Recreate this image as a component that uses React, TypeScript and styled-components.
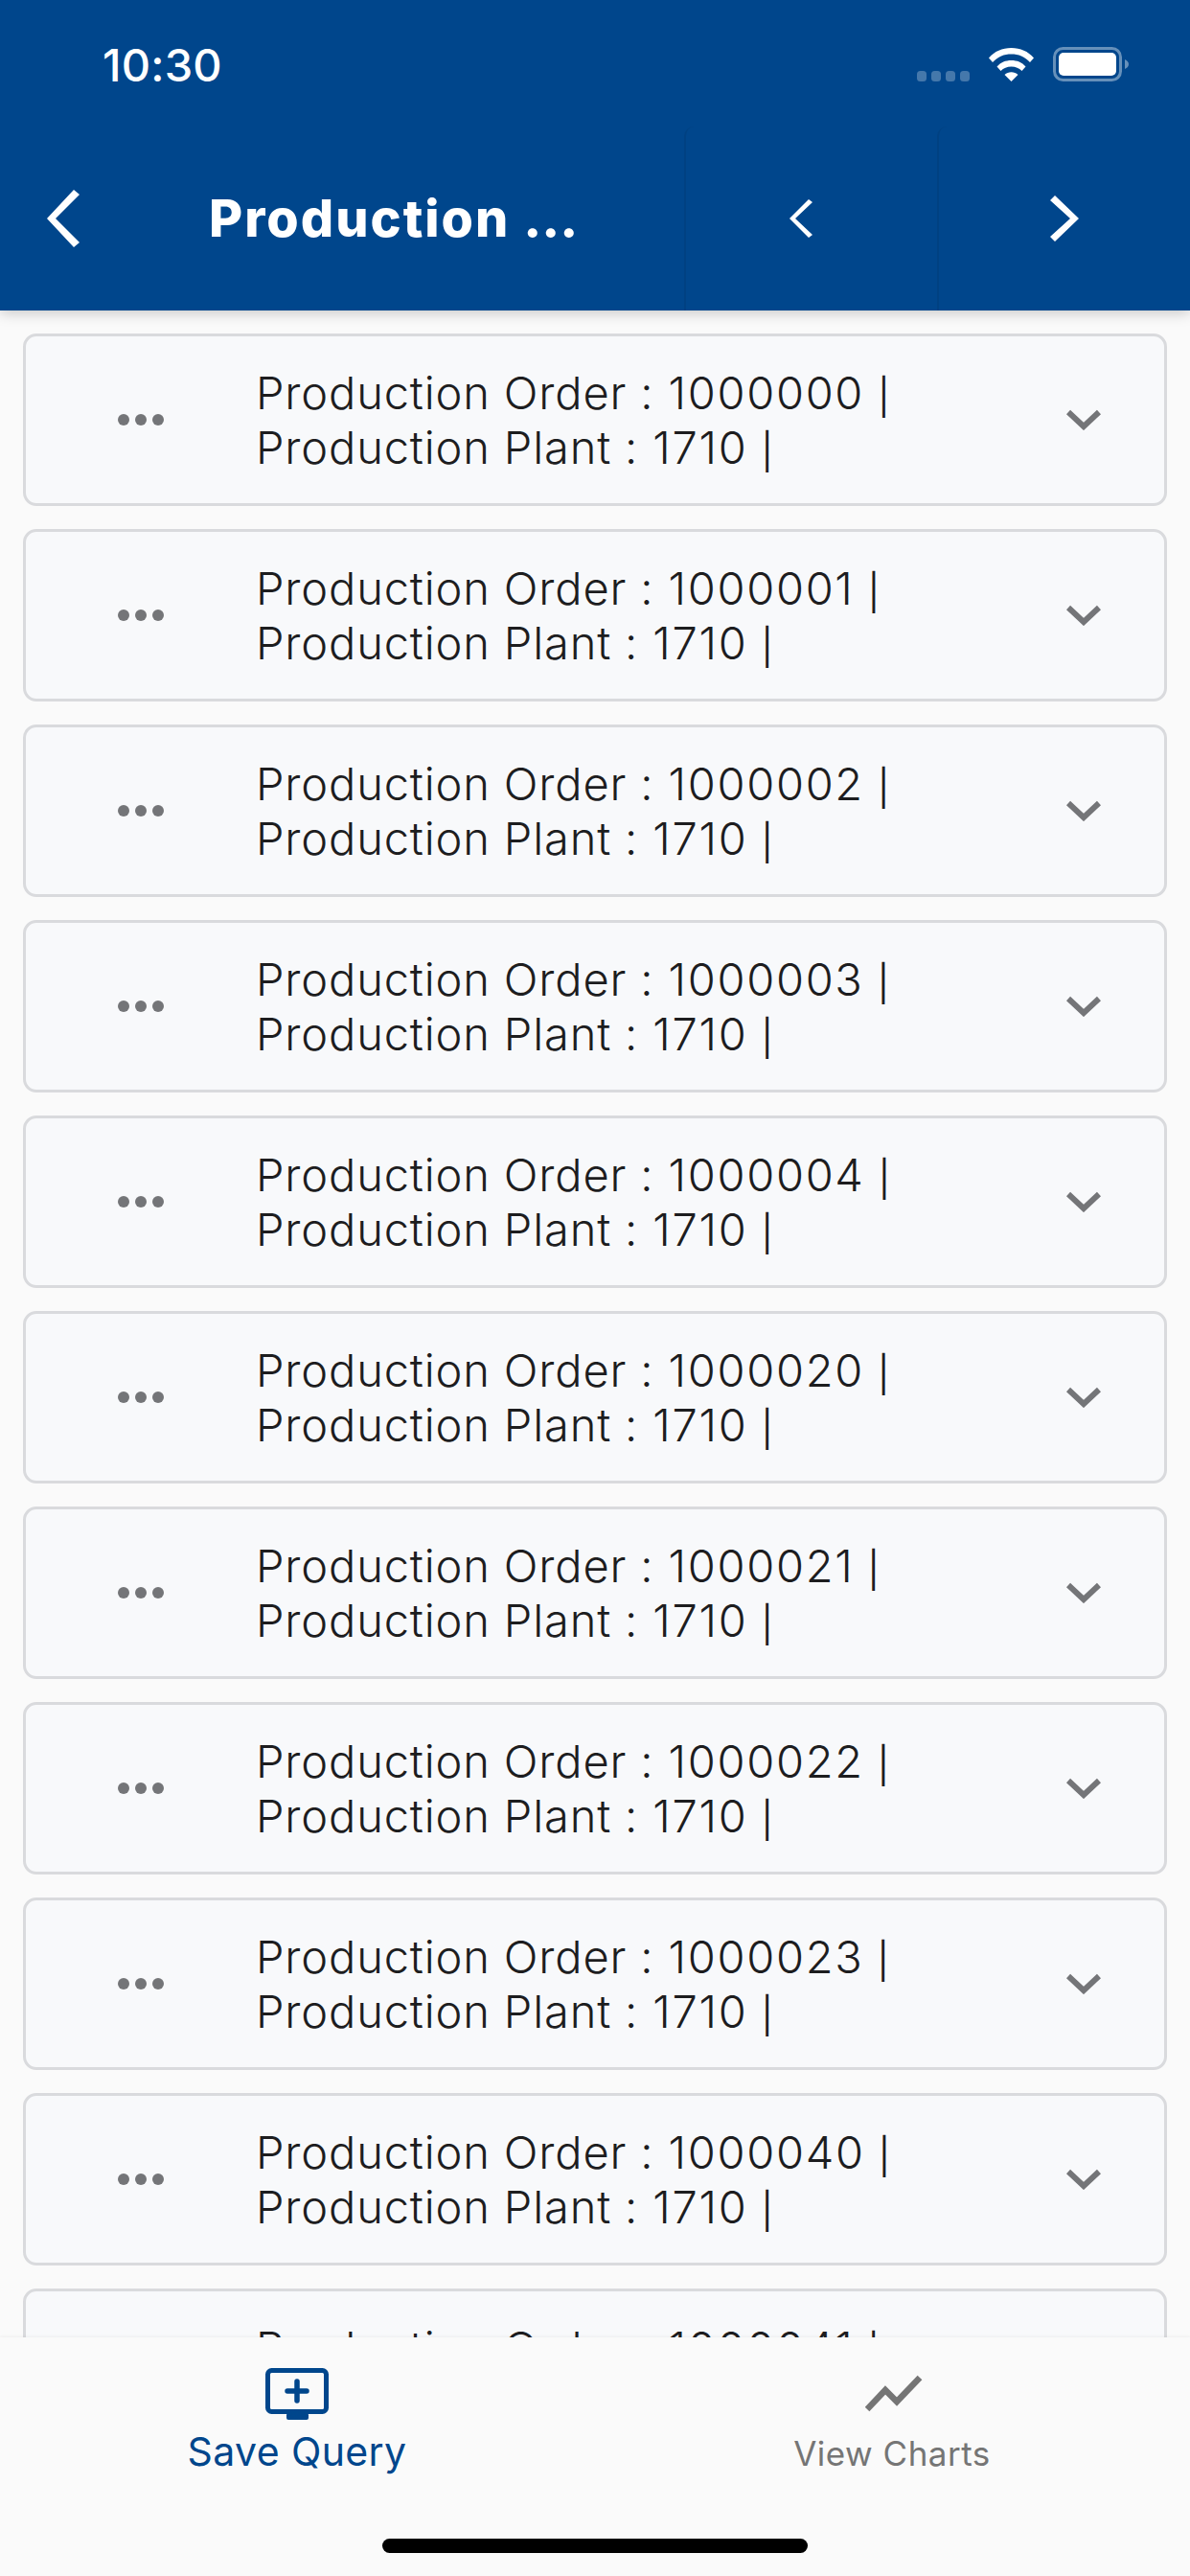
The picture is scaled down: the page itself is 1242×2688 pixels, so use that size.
import React from 'react'
import styled, { createGlobalStyle } from 'styled-components'

const GlobalStyle = createGlobalStyle`
    html, body {
        margin: 0;
        padding: 0;
        background: #fafafa;
    }
    * {
        box-sizing: border-box;
    }
`

const Screen = styled.div`
    width: 1242px;
    height: 2688px;
    display: flex;
    flex-direction: column;
    overflow: hidden;
    background: #fafafa;
    font-family: Inter, "Liberation Sans", sans-serif;
    font-variant-ligatures: no-contextual;
    font-feature-settings: "calt" 0;
`

const Header = styled.header`
    height: 324px;
    flex-shrink: 0;
    background: #00468c;
    box-shadow: 0 2px 14px rgba(0, 0, 0, .22);
    position: relative;
    z-index: 2;
    display: flex;
    flex-direction: column;
`

const StatusBar = styled.div`
    height: 132px;
    padding: 0 64px 0 107px;
    display: flex;
    justify-content: space-between;
    align-items: flex-start;
`

const Time = styled.span`
    margin-top: 40px;
    font-size: 47px;
    line-height: 56px;
    font-weight: 500;
    letter-spacing: .2px;
    color: #fff;
`

const StatusIcons = styled.div`
    margin-top: 49px;
    display: flex;
    align-items: flex-start;
    gap: 20px;
`

const NavBar = styled.div`
    height: 192px;
    display: flex;
    align-items: stretch;
`

const BackCell = styled.div`
    width: 218px;
    padding-left: 49px;
    display: flex;
    align-items: center;
`

const Title = styled.h1`
    flex: 1;
    margin: 0;
    font-size: 54px;
    line-height: 192px;
    font-weight: 800;
    letter-spacing: 2px;
    color: #fff;
    white-space: nowrap;
`

const TitleDots = styled.span`
    letter-spacing: 0;
`

const NavButton = styled.div<{ $shift: number }>`
    width: 264px;
    padding-right: ${props => props.$shift}px;
    display: flex;
    align-items: center;
    justify-content: center;
    border-left: 2px solid rgba(0, 0, 0, .07);
    border-radius: 10px 10px 0 0;
`

const List = styled.main`
    flex: 1;
    min-height: 0;
    overflow: hidden;
    padding: 24px 24px 0;
    display: flex;
    flex-direction: column;
    gap: 24px;
`

const Card = styled.div`
    height: 180px;
    flex-shrink: 0;
    display: grid;
    grid-template-columns: 240px 1fr 168px;
    align-items: center;
    background: #f8f9fb;
    border: 3px solid #d9dadd;
    border-radius: 14px;
`

const DotsCell = styled.div`
    display: flex;
    justify-content: center;
    gap: 6px;
`

const Dot = styled.i`
    width: 12px;
    height: 12px;
    border-radius: 50%;
    background: #747578;
`

const CardText = styled.div`
    font-size: 47px;
    line-height: 57px;
    font-weight: 300;
    letter-spacing: .85px;
    color: #1d1d1f;
    white-space: nowrap;
`

const Value = styled.span`
    margin-left: 1px;
    letter-spacing: 1.7px;
`

const Pipe = styled.span`
    font-size: 37px;
    line-height: 0;
    font-weight: 400;
`

const ChevronCell = styled.div`
    display: flex;
    justify-content: center;
`

const TabBar = styled.footer`
    height: 249px;
    flex-shrink: 0;
    position: relative;
    z-index: 1;
    background: #fafafa;
    box-shadow: 0 -1px 3px rgba(0, 0, 0, .05);
    display: grid;
    grid-template-columns: 620px 1fr;
`

const Tab = styled.div`
    display: flex;
    flex-direction: column;
    align-items: center;
    padding-top: 32px;
`

const TabIcon = styled.div<{ $shift?: number }>`
    height: 54px;
    margin-left: ${props => props.$shift ?? 0}px;
    display: flex;
    align-items: center;
`

const TabLabel = styled.span<{ $active?: boolean }>`
    margin-top: ${props => props.$active ? '8px' : '10px'};
    font-size: ${props => props.$active ? '41px' : '35px'};
    line-height: 50px;
    letter-spacing: ${props => props.$active ? '.4px' : '.5px'};
    font-weight: 400;
    color: ${props => props.$active ? '#00468c' : '#757575'};
`

const HomeIndicator = styled.div`
    position: absolute;
    left: 399px;
    top: 210px;
    width: 444px;
    height: 15px;
    border-radius: 8px;
    background: #000;
`

const ORDERS = [
    '1000000', '1000001', '1000002', '1000003', '1000004', '1000020',
    '1000021', '1000022', '1000023', '1000040', '1000041'
]

const WifiIcon = () => (
    <svg width="47" height="36" viewBox="0 0 47 36">
        <path d="M0 11.5C6 4.5 14 1 23.5 1S41 4.5 47 11.5L43 16C37.500 10 31 7.500 23.500 7.500S9.500 10 4 16Z" fill="#fff" />
        <path d="M8.500 20.500C12.500 16 17.500 14 23.500 14S34.500 16 38.500 20.500L34.500 25C31.500 22 28 20.500 23.500 20.500S15.500 22 12.500 25Z" fill="#fff" />
        <path d="M16.500 29C18.500 27.200 20.800 26.300 23.500 26.300S28.500 27.200 30.500 29L23.500 36Z" fill="#fff" />
    </svg>
)

const BatteryIcon = () => (
    <svg width="79" height="36" viewBox="0 0 79 36">
        <rect x="1.500" y="1.500" width="69" height="33" rx="9" fill="none" stroke="#fff" strokeOpacity=".4" strokeWidth="3" />
        <rect x="6" y="6" width="60" height="24" rx="5" fill="#fff" />
        <path d="M75 13C77.500 14 79 16 79 18S77.500 22 75 23Z" fill="#fff" fillOpacity=".4" />
    </svg>
)

const SignalIcon = () => (
    <svg width="55" height="36" viewBox="0 0 55 36">
        {[0, 15, 30, 45].map(x => (
            <rect key={x} x={x} y="25" width="10" height="11" rx="3.500" fill="#fff" fillOpacity=".27" />
        ))}
    </svg>
)

const NavChevron: React.FC<{ points: string, width: number, height: number }> = ({ points, width, height }) => (
    <svg width={width} height={height} viewBox={`0 0 ${width} ${height}`}>
        <polygon points={points} fill="#fff" />
    </svg>
)

const App: React.FC = () => {
    return (
        <Screen>
            <GlobalStyle />
            <Header>
                <StatusBar>
                    <Time>10:30</Time>
                    <StatusIcons>
                        <SignalIcon />
                        <WifiIcon />
                        <BatteryIcon />
                    </StatusIcons>
                </StatusBar>
                <NavBar>
                    <BackCell>
                        <NavChevron width={34} height={60} points="28,0 34,5 9,30 34,55 28,60 0,30" />
                    </BackCell>
                    <Title>Production <TitleDots>...</TitleDots></Title>
                    <NavButton $shift={22}>
                        <NavChevron width={24} height={40} points="20,0 24,3 6,20 24,37 20,40 0,20" />
                    </NavButton>
                    <NavButton $shift={0}>
                        <NavChevron width={30} height={48} points="5,0 30,24 5,48 0,43 21,24 0,5" />
                    </NavButton>
                </NavBar>
            </Header>
            <List>
                {ORDERS.map(order => (
                    <Card key={order}>
                        <DotsCell>
                            <Dot />
                            <Dot />
                            <Dot />
                        </DotsCell>
                        <CardText>
                            <div>Production Order : <Value>{order}</Value> <Pipe>|</Pipe></div>
                            <div>Production Plant : <Value>1710</Value> <Pipe>|</Pipe></div>
                        </CardText>
                        <ChevronCell>
                            <svg width="36" height="22" viewBox="0 0 36 22">
                                <path d="M2 3L18 18L34 3" fill="none" stroke="#747578" strokeWidth="6" />
                            </svg>
                        </ChevronCell>
                    </Card>
                ))}
            </List>
            <TabBar>
                <Tab>
                    <TabIcon>
                        <svg width="66" height="54" viewBox="0 0 66 54">
                            <rect x="2.500" y="2.500" width="61" height="43" rx="4" fill="none" stroke="#00468c" strokeWidth="5" />
                            <rect x="22" y="47" width="23" height="7" rx="2" fill="#00468c" />
                            <path d="M33 14V34M23 24H43" stroke="#00468c" strokeWidth="5.500" strokeLinecap="round" />
                        </svg>
                    </TabIcon>
                    <TabLabel $active>Save Query</TabLabel>
                </Tab>
                <Tab>
                    <TabIcon $shift={3}>
                        <svg width="60" height="40" viewBox="0 0 60 40">
                            <path d="M2 36L21 16L33 28L57 3" fill="none" stroke="#757575" strokeWidth="6.500" />
                        </svg>
                    </TabIcon>
                    <TabLabel>View Charts</TabLabel>
                </Tab>
                <HomeIndicator />
            </TabBar>
        </Screen>
    )
}

export default App
